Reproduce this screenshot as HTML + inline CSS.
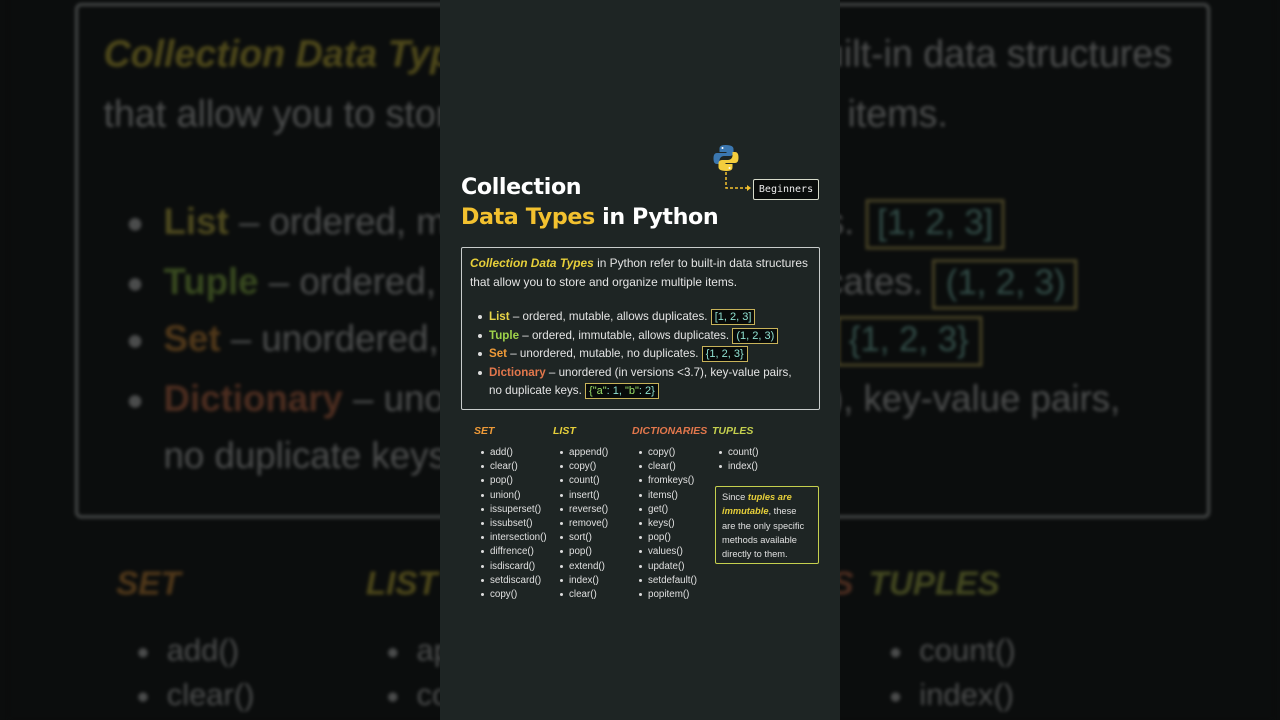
<!DOCTYPE html>
<html><head><meta charset="utf-8"><style>
*{margin:0;padding:0;box-sizing:border-box}
html{width:1280px;height:720px;overflow:hidden}
body{width:1280px;height:720px;overflow:hidden;background:#0b0d0d;position:relative;font-family:"Liberation Sans","DejaVu Sans",sans-serif}
.col{position:absolute;top:0;width:400px;height:720px;background:#1e2524;color:#e6e6e6}
#main{left:440px}
#bg{left:0;top:0;height:474px;overflow:hidden;transform-origin:0 0;transform:translate(8.6px,-778px) scale(3.162);opacity:.3;filter:blur(.6px);background:#0b0d0d}
#bg .title,#bg .py,#bg .beg,#bg .dash{visibility:hidden}
.clip{position:absolute;left:0;top:0;width:1280px;height:720px;overflow:hidden}
.a{position:absolute}
.title{left:21px;top:172px;font-family:"DejaVu Sans",sans-serif;font-size:22.2px;font-weight:bold;line-height:30px;color:#fff;letter-spacing:-0.4px}
.y{color:#f3c12f}
.box{left:21px;top:247px;width:359px;height:163px;border:1px solid #c8cccb;border-radius:2px}
.p{left:30px;top:254px;font-size:11.9px;line-height:19px;color:#e4e4e4;width:348px}
.ul{left:38px;top:308px;font-size:11.6px;line-height:18.5px;color:#e4e4e4}
.ul div{position:relative;padding-left:11px}
.ul div:before{content:"";position:absolute;left:0;top:7px;width:4px;height:4px;border-radius:50%;background:#ddd}
.code{display:inline-block;background:#080b0a;border:1px solid #c8b35a;color:#8fe0d0;padding:0 3px;line-height:14px;font-size:11px;margin-left:0}
.h{top:425px;font-size:10.5px;font-weight:bold;font-style:italic}
.li{top:446px;font-size:9.8px;line-height:14.2px;color:#e0e0e0}
.li div{position:relative;padding-left:9px}
.li div:before{content:"";position:absolute;left:0;top:5px;width:3px;height:3px;border-radius:50%;background:#ddd}
.note{left:275px;top:486px;width:104px;height:78px;border:1.5px solid #c5d04e;border-radius:2px;padding:3px 6px;font-size:9.3px;line-height:14.3px;color:#e0e0e0}
.beg{left:313px;top:179px;width:66px;height:21px;border:1px solid #d8dccc;border-radius:2px;background:#0a0d0c;font-family:"DejaVu Sans Mono",monospace;font-size:10px;line-height:19px;text-align:center;color:#eee}
</style></head><body>
<div class="clip">
<div class="col" id="bg"></div>
</div>
<div class="col" id="main">
<svg class="a py" style="left:273px;top:144px" width="26" height="28" viewBox="0 0 26 28">
<path d="M12.5 1C7 1 6.5 3 6.5 5v3h7v1H4c-2.5 0-3.5 2-3.5 5.5S1.5 20 4 20h2.5v-3.5c0-2.5 2-4.5 4.5-4.5h6c2 0 3.5-1.5 3.5-3.5V5c0-2-1.5-4-8-4z" fill="#3b77b0"/>
<path d="M13.5 27c5.5 0 6-2 6-4v-3h-7v-1H22c2.5 0 3.5-2 3.5-5.5S24.5 8 22 8h-2.5v3.5c0 2.5-2 4.5-4.5 4.5H9c-2 0-3.5 1.5-3.5 3.5V23c0 2 1.5 4 8 4z" fill="#f3cd3d"/>
<circle cx="9.5" cy="4" r="1" fill="#fff"/><circle cx="16.5" cy="24" r="1" fill="#fff"/></svg>
<svg class="a dash" style="left:284px;top:172px" width="30" height="20"><path d="M2 0V16H24" stroke="#f3c12f" stroke-width="1.5" stroke-dasharray="3 2" fill="none"/><path d="M23 13l4 3-4 3z" fill="#f3c12f"/></svg>
<div class="a beg">Beginners</div>
<div class="a title">Collection<br><span class="y">Data Types</span> in Python</div>
<div class="a box"></div>
<div class="a p"><i style="color:#e6cf3a;font-weight:bold">Collection Data Types</i> in Python refer to built-in data structures that allow you to store and organize multiple items.</div>
<div class="a ul">
<div><b style="color:#e8d548">List</b> – ordered, mutable, allows duplicates. <span class="code">[1, 2, 3]</span></div>
<div><b style="color:#9fd24a">Tuple</b> – ordered, immutable, allows duplicates. <span class="code">(1, 2, 3)</span></div>
<div><b style="color:#ee9a38">Set</b> – unordered, mutable, no duplicates. <span class="code">{1, 2, 3}</span></div>
<div><b style="color:#e2774c">Dictionary</b> – unordered (in versions &lt;3.7), key-value pairs,<br>no duplicate keys. <span class="code"><span style="color:#9be06a">{"a"</span>: 1, <span style="color:#9be06a">"b"</span>: 2}</span></div>
</div>
<div class="a h" style="left:34px;color:#ee9a38">SET</div>
<div class="a h" style="left:113px;color:#e6cf3a">LIST</div>
<div class="a h" style="left:192px;color:#e2774c">DICTIONARIES</div>
<div class="a h" style="left:272px;color:#c5d04e">TUPLES</div>
<div class="a li" style="left:41px"><div>add()</div><div>clear()</div><div>pop()</div><div>union()</div><div>issuperset()</div><div>issubset()</div><div>intersection()</div><div>diffrence()</div><div>isdiscard()</div><div>setdiscard()</div><div>copy()</div></div>
<div class="a li" style="left:120px"><div>append()</div><div>copy()</div><div>count()</div><div>insert()</div><div>reverse()</div><div>remove()</div><div>sort()</div><div>pop()</div><div>extend()</div><div>index()</div><div>clear()</div></div>
<div class="a li" style="left:199px"><div>copy()</div><div>clear()</div><div>fromkeys()</div><div>items()</div><div>get()</div><div>keys()</div><div>pop()</div><div>values()</div><div>update()</div><div>setdefault()</div><div>popitem()</div></div>
<div class="a li" style="left:279px"><div>count()</div><div>index()</div></div>
<div class="a note">Since <b><i style="color:#e6cf3a">tuples are immutable</i></b>, these are the only specific methods available directly to them.</div>
</div>
<script>document.getElementById('bg').innerHTML=document.getElementById('main').innerHTML;</script>
</body></html>
